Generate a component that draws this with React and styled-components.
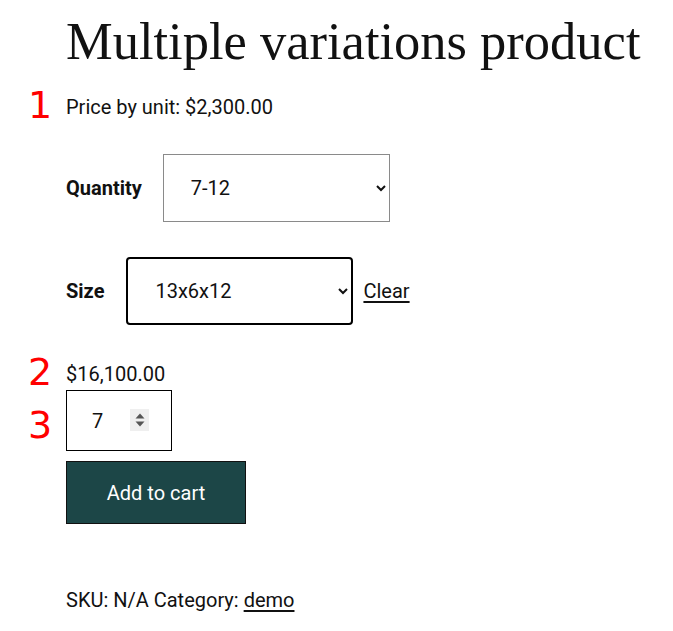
import React from "react";
import styled, { createGlobalStyle } from "styled-components";

const GlobalStyle = createGlobalStyle`
	body {
		margin: 0;
		background: #fff;
		color: #111;
		font-family: Roboto, "Liberation Sans", sans-serif;
	}
`;

const Page = styled.div`
	padding: 12px 0 0 66px;
	display: flex;
	flex-direction: column;
	align-items: flex-start;
	font-size: 20px;
`;

const Title = styled.h1`
	margin: 0;
	font-family: "Liberation Serif", serif;
	font-weight: 400;
	font-size: 52.5px;
	line-height: 58px;
	color: #111;
`;

const Annotated = styled.div`
	position: relative;
	margin-top: ${(p) => p.$top || 0}px;
`;

const Mark = styled.span`
	position: absolute;
	left: -38px;
	top: ${(p) => p.$offset || 0}px;
	font-family: "DejaVu Sans", sans-serif;
	font-size: 38px;
	line-height: 1;
	color: #f00;
`;

const Line = styled.p`
	margin: 0;
	line-height: 26px;
`;

const VariationRow = styled.div`
	display: flex;
	align-items: center;
	margin-top: ${(p) => p.$top}px;
`;

const Label = styled.label`
	font-weight: 700;
	margin-right: ${(p) => p.$gap}px;
`;

const Select = styled.select`
	width: 227px;
	height: 68px;
	font-family: inherit;
	font-size: 20px;
	color: #111;
	background: #fff;
	padding: 0 10px 0 23px;
	border: ${(p) => (p.$active ? "2px solid #000" : "1px solid #8a8a8a")};
	border-radius: ${(p) => (p.$active ? "4px" : "0")};
`;

const ClearLink = styled.a`
	margin-left: 10px;
	color: #111;
	text-decoration: underline;
	text-underline-offset: 3px;
`;

const QtyInput = styled.input`
	box-sizing: border-box;
	width: 106px;
	height: 61px;
	border: 1px solid #000;
	padding: 0 22px 0 25px;
	font-family: inherit;
	font-size: 20px;
	color: #111;
	-moz-appearance: textfield;

	&::-webkit-inner-spin-button,
	&::-webkit-outer-spin-button {
		-webkit-appearance: none;
		margin: 0;
	}
`;

const Spinner = styled.span`
	position: absolute;
	left: 64px;
	top: 19px;
	width: 19px;
	height: 22px;
	background: #efefef;
	display: flex;
	align-items: center;
	justify-content: center;
	pointer-events: none;
`;

const CartButton = styled.button`
	margin-top: 10px;
	width: 180px;
	height: 63px;
	background: #1c4647;
	border: 1px solid #111;
	color: #fff;
	font-family: inherit;
	font-size: 20px;
`;

const Meta = styled.div`
	margin-top: 63px;
	line-height: 26px;

	a {
		color: #111;
		text-decoration: underline;
		text-underline-offset: 3px;
	}
`;

export default function App() {
	return (
		<>
			<GlobalStyle />
			<Page>
				<Title>Multiple variations product</Title>
				<Annotated $top={24}>
					<Mark $offset={-8}>1</Mark>
					<Line>Price by unit: $2,300.00</Line>
				</Annotated>

				<VariationRow $top={34}>
					<Label $gap={21}>Quantity</Label>
					<Select defaultValue="7-12">
						<option>1-6</option>
						<option>7-12</option>
					</Select>
				</VariationRow>
				<VariationRow $top={35}>
					<Label $gap={22}>Size</Label>
					<Select $active defaultValue="13x6x12">
						<option>13x6x12</option>
					</Select>
					<ClearLink href="#">Clear</ClearLink>
				</VariationRow>

				<Annotated $top={36}>
					<Mark $offset={-8}>2</Mark>
					<Line>$16,100.00</Line>
				</Annotated>
				<Annotated $top={3}>
					<Mark $offset={16}>3</Mark>
					<QtyInput type="number" defaultValue={7} min={1} />
					<Spinner>
						<svg width="10" height="14" viewBox="0 0 10 14">
							<path d="M5 0.5 L9.5 5.5 H0.5 Z" fill="#555" />
							<path d="M0.5 8.5 H9.5 L5 13.5 Z" fill="#555" />
						</svg>
					</Spinner>
				</Annotated>
				<CartButton>Add to cart</CartButton>

				<Meta>
					SKU: N/A Category: <a href="#">demo</a>
				</Meta>
			</Page>
		</>
	);
}
